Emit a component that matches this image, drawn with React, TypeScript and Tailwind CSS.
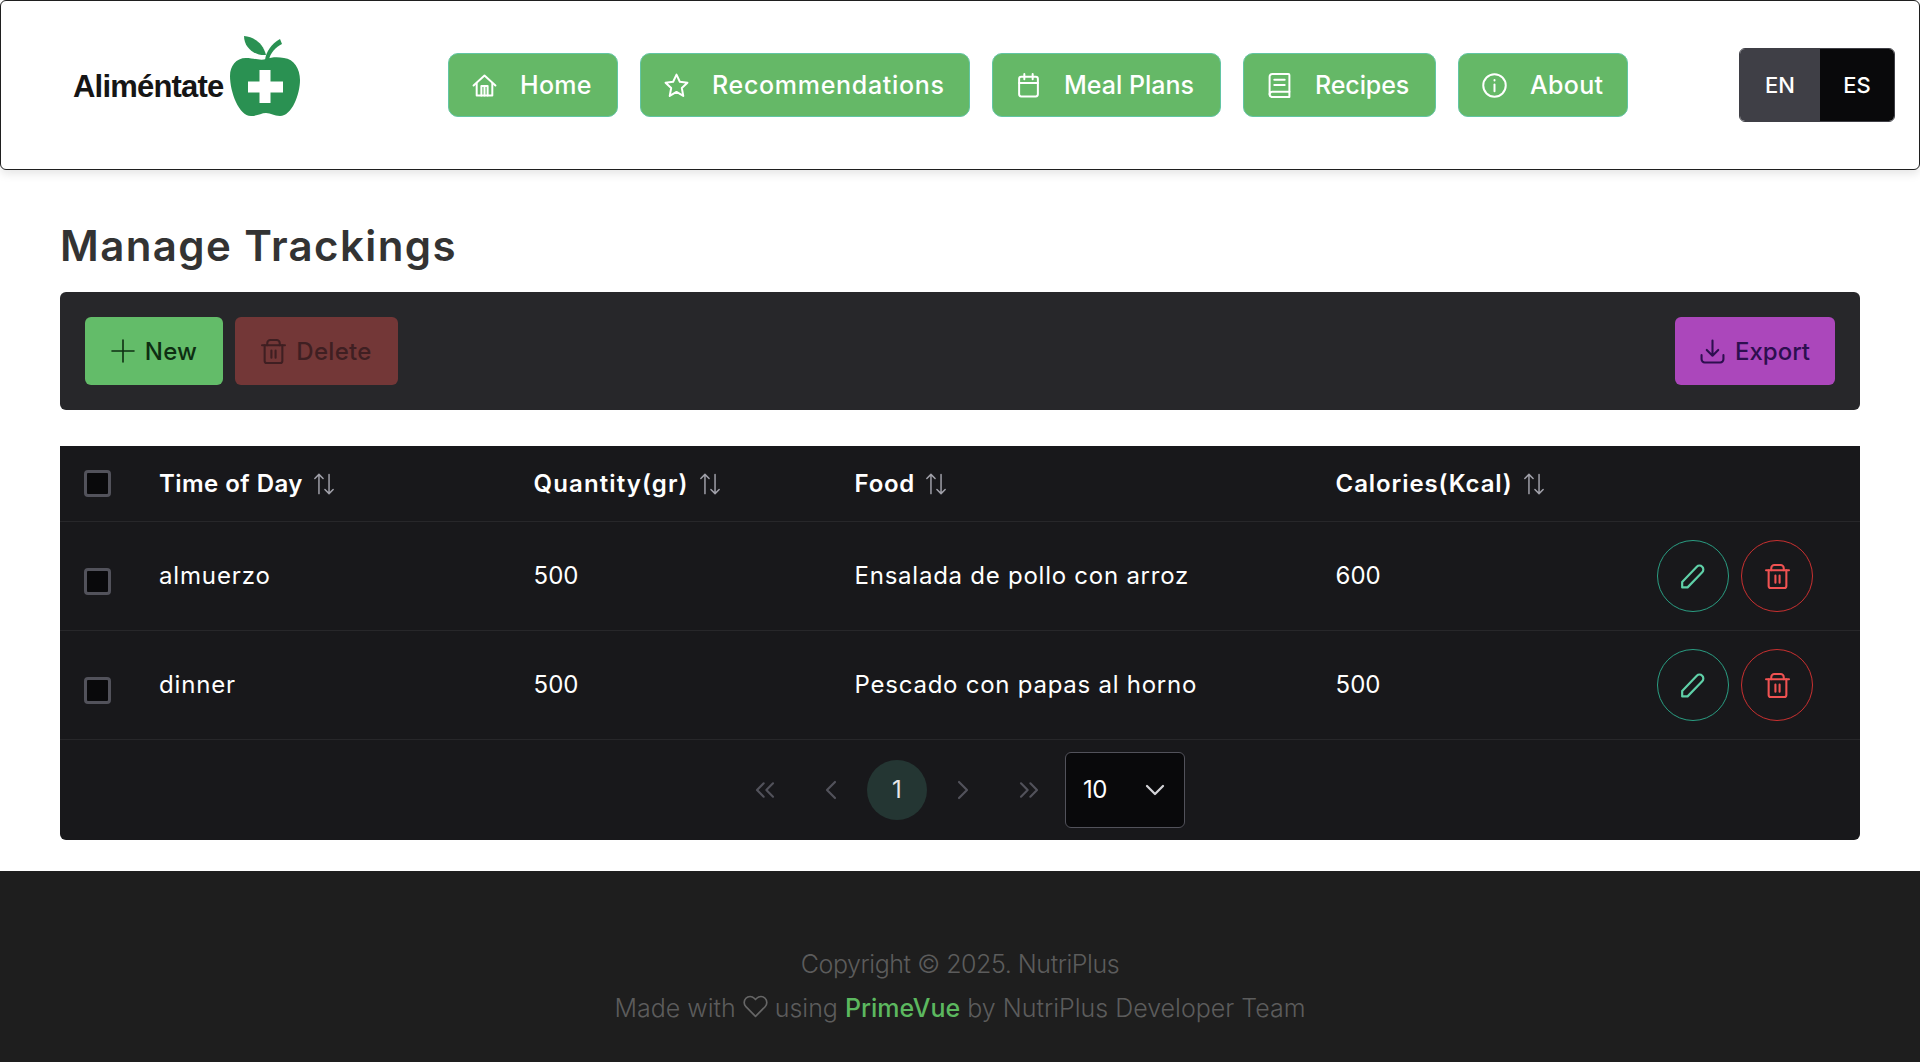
import React from 'react';
import { ChevronDown, ChevronLeft, ChevronRight, ChevronsLeft, ChevronsRight } from 'lucide-react';

type IconProps = { className?: string };

// primeicons-like line icons, 24x24 box
const Line = ({ className, sw = 1.9, children }: IconProps & { sw?: number; children: React.ReactNode }) => (
  <svg viewBox="0 0 24 24" fill="none" stroke="currentColor" strokeWidth={sw} strokeLinecap="round" strokeLinejoin="round" className={className}>
    {children}
  </svg>
);

const HomeIcon = (p: IconProps) => (
  <Line {...p}>
    <path d="M1.500 12 12 2.500 22.500 12" />
    <path d="M4.500 10v11.500h15V10" />
    <path d="M9 21.500V12.500h6v9" />
    <path d="M12 12.500v9" />
  </Line>
);
const StarIcon = (p: IconProps) => (
  <Line {...p}>
    <path d="m12 1.500 3.200 6.900 7.300.9-5.400 5.100 1.400 7.600-6.500-3.800-6.500 3.800 1.400-7.600-5.400-5.100 7.300-.9Z" />
  </Line>
);
const CalendarIcon = (p: IconProps) => (
  <Line {...p}>
    <rect x="3" y="3.500" width="18" height="19" rx="2" />
    <path d="M3 9.500h18M8 1v5M16 1v5" />
  </Line>
);
const BookIcon = (p: IconProps) => (
  <Line {...p}>
    <path d="M5 1h15.500a1 1 0 0 1 1 1v21H5a2.500 2.500 0 0 1-2.500-2.500v-17A2.500 2.500 0 0 1 5 1Z" />
    <path d="M2.500 20.500A2.500 2.500 0 0 1 5 18h16.500" />
    <path d="M7 6.500h10M7 11.500h10" />
  </Line>
);
const InfoIcon = (p: IconProps) => (
  <Line {...p}>
    <circle cx="12" cy="12" r="10.800" />
    <path d="M12 11v6.500" />
    <path d="M12 6.800v.4" />
  </Line>
);
const PlusIcon = (p: IconProps) => (
  <Line sw={1.6} {...p}>
    <path d="M12 1v22M1 12h22" />
  </Line>
);
const TrashIcon = (p: IconProps) => (
  <Line sw={2} {...p}>
    <path d="M1 6h22" />
    <path d="M6 6V4a3 3 0 0 1 3-3h6a3 3 0 0 1 3 3v2" />
    <path d="M3.500 6v15a2 2 0 0 0 2 2h13a2 2 0 0 0 2-2V6" />
    <path d="M10 11v7M14 11v7" />
  </Line>
);
const DownloadIcon = (p: IconProps) => (
  <Line sw={2} {...p}>
    <path d="M12 1.500V16M6.500 10.500 12 16l5.500-5.500" />
    <path d="M1.500 15.500v4a3 3 0 0 0 3 3h15a3 3 0 0 0 3-3v-4" />
  </Line>
);
const PencilIcon = (p: IconProps) => (
  <Line sw={2} {...p}>
    <path d="M2 17.500 15.500 3.500a3.500 3.500 0 0 1 5 5L7 22.500H2Z" />
  </Line>
);
const SortIcon = (p: IconProps) => (
  <Line sw={1.6} {...p}>
    <path d="M6.500 22.500V1.500M2 6l4.500-4.500L11 6" />
    <path d="M17.500 1.500v21M13 18l4.500 4.500L22 18" />
  </Line>
);
const HeartIcon = (p: IconProps) => (
  <Line sw={1.6} {...p}>
    <path d="M12 21.500 2.800 12.200a5.800 5.800 0 0 1 0-8.100 5.600 5.600 0 0 1 8 0L12 5.300l1.200-1.200a5.600 5.600 0 0 1 8 0 5.800 5.800 0 0 1 0 8.100Z" />
  </Line>
);

const navItems = [
  { icon: HomeIcon, label: 'Home', width: 'w-[170px]', tracking: 'tracking-[0.300px]' },
  { icon: StarIcon, label: 'Recommendations', width: 'w-[330px]', tracking: 'tracking-[0.700px]' },
  { icon: CalendarIcon, label: 'Meal Plans', width: 'w-[229px]', tracking: 'tracking-[0px]' },
  { icon: BookIcon, label: 'Recipes', width: 'w-[193px]', tracking: 'tracking-[-0.100px]' },
  { icon: InfoIcon, label: 'About', width: 'w-[170px]', tracking: 'tracking-[0.300px]' },
];

const columns = [
  { label: 'Time of Day', tracking: 'tracking-[0.460px]' },
  { label: 'Quantity(gr)', tracking: 'tracking-[1.100px]' },
  { label: 'Food', tracking: 'tracking-[0.700px]' },
  { label: 'Calories(Kcal)', tracking: 'tracking-[0.900px]' },
];

const rows = [
  { time: 'almuerzo', qty: '500', food: 'Ensalada de pollo con arroz', cal: '600' },
  { time: 'dinner', qty: '500', food: 'Pescado con papas al horno', cal: '500' },
];

const tableCols = 'grid grid-cols-[99px_374.600px_321px_481px_1fr] items-center';

function Logo() {
  return (
    <div className="flex items-end w-[228px] h-[80px] mb-[18px]">
      <span className="font-['Liberation_Sans',sans-serif] font-bold text-[31px] leading-none tracking-[-0.800px] text-[#151515] mb-[14px] w-[157px] whitespace-nowrap">
        Aliméntate
      </span>
      <svg viewBox="0 0 70 80" className="w-[70px] h-[80px] shrink-0">
        <path fill="#2a9152" d="M36 23C42 21 48 21 54 22 64 23 70 33 70 44 70 58 62 80 50 80 44 80 41 77 36 77 31 77 28 80 21 80 9 80 0 56 0 40 0 30 6 22 16 22 24 22 30 25 36 23Z" />
        <path fill="#2a9152" d="M14 0C24 1 33 7 36 19 25 20 14 12 14 0Z" />
        <path fill="#2a9152" d="M35 24C36 16 41 8 50 3L52 8C46 11 40 17 39 24Z" />
        <path fill="#fff" d="M29.500 34h11v11.500H53v11H40.500V67h-11V56.500H18v-11h11.500Z" />
      </svg>
    </div>
  );
}

function Checkbox() {
  return <div className="w-[27px] h-[27px] rounded-[4px] border-[3px] border-[#52525b] bg-[#09090b]" />;
}

export default function App() {
  return (
    <div className="min-h-[1062px] bg-white font-['Inter',sans-serif] flex flex-col">
      {/* Header */}
      <header className="h-[170px] border border-[#1f1f1f] rounded-[6px] shadow-[0_4px_10px_rgba(0,0,0,0.1)] bg-white flex items-center pl-[72px] pr-[24px]">
        <Logo />
        <nav className="flex gap-[22px] ml-[147px]">
          {navItems.map(({ icon: Icon, label, width, tracking }) => (
            <a key={label} className={`${width} h-[64px] rounded-[10px] bg-[#65b867] border border-[#62c5a4] text-white flex items-center pl-[23px] gap-[23px]`}>
              <Icon className="w-[25px] h-[25px] shrink-0" />
              <span className={`${tracking} text-[25px] font-medium pt-[2px] whitespace-nowrap`}>{label}</span>
            </a>
          ))}
        </nav>
        <div className="ml-auto flex w-[156px] h-[74px] rounded-[6px] overflow-hidden border border-[#3f3f46] text-white text-[22px] font-medium">
          <div className="w-[80px] bg-[#3f3f46] flex items-center justify-center">EN</div>
          <div className="flex-1 bg-[#09090b] flex items-center justify-center">ES</div>
        </div>
      </header>

      {/* Main */}
      <main className="px-[60px] pt-[46px] flex-1">
        <h1 className="text-[42px] leading-[60px] font-semibold text-[#333333] tracking-[1.400px]">Manage Trackings</h1>

        <div className="mt-[16px] h-[118px] bg-[#27272a] rounded-[6px] px-[25px] flex items-center">
          <button className="h-[68px] w-[138px] rounded-[6px] bg-[#63bc69] text-[#0e2e12] flex items-center justify-center gap-[10px] text-[24px] font-medium">
            <PlusIcon className="w-[24px] h-[24px]" />
            <span className="pt-[2px] tracking-[0.200px]">New</span>
          </button>
          <button className="ml-[12px] h-[68px] w-[163px] rounded-[6px] bg-[#733737] text-[#3f1f22] flex items-center justify-center gap-[10px] text-[24px] font-medium">
            <TrashIcon className="w-[25px] h-[25px]" />
            <span className="pt-[2px] tracking-[0.300px]">Delete</span>
          </button>
          <button className="ml-auto h-[68px] w-[160px] rounded-[6px] bg-[#ab47bb] text-[#2d0f4f] flex items-center justify-center gap-[10px] text-[24px] font-medium">
            <DownloadIcon className="w-[25px] h-[25px]" />
            <span className="pt-[2px]">Export</span>
          </button>
        </div>

        {/* Table */}
        <div className="mt-[36px] bg-[#18181b] text-white rounded-b-[6px]">
          <div className={`${tableCols} h-[75px]`}>
            <div className="pl-[24px]"><Checkbox /></div>
            {columns.map((col) => (
              <div key={col.label} className="flex items-center gap-[10px] text-[24px] font-semibold">
                <span className={`${col.tracking} whitespace-nowrap`}>{col.label}</span>
                <SortIcon className="w-[22px] h-[22px] text-[#a1a1aa]" />
              </div>
            ))}
          </div>
          {rows.map((row) => (
            <div key={row.time} className={`${tableCols} h-[109px] border-t border-[#27272a] text-[24px]`}>
              <div className="pl-[24px] pt-[11px]"><Checkbox /></div>
              <div className="tracking-[0.850px]">{row.time}</div>
              <div>{row.qty}</div>
              <div className="whitespace-nowrap tracking-[0.750px]">{row.food}</div>
              <div className="flex items-center justify-between pr-[47px]">
                <span>{row.cal}</span>
                <div className="flex gap-[12px]">
                  <button className="w-[72px] h-[72px] rounded-full border border-[#2a9d82] text-[#5fd0a8] flex items-center justify-center">
                    <PencilIcon className="w-[26px] h-[26px]" />
                  </button>
                  <button className="w-[72px] h-[72px] rounded-full border border-[#c93030] text-[#f05252] flex items-center justify-center">
                    <TrashIcon className="w-[25px] h-[25px]" />
                  </button>
                </div>
              </div>
            </div>
          ))}
          {/* Paginator */}
          <div className="h-[101px] border-t border-[#27272a] flex items-center justify-center text-[#52525b]">
            <div className="flex items-center">
              <span className="w-[60px] h-[60px] flex items-center justify-center"><ChevronsLeft className="w-[32px] h-[32px]" strokeWidth={1.6} /></span>
              <span className="ml-[6px] w-[60px] h-[60px] flex items-center justify-center"><ChevronLeft className="w-[32px] h-[32px]" strokeWidth={1.6} /></span>
              <span className="ml-[6px] w-[60px] h-[60px] rounded-full bg-[#243633] text-[#e8e8e8] text-[24px] flex items-center justify-center">1</span>
              <span className="ml-[6px] w-[60px] h-[60px] flex items-center justify-center"><ChevronRight className="w-[32px] h-[32px]" strokeWidth={1.6} /></span>
              <span className="ml-[6px] w-[60px] h-[60px] flex items-center justify-center"><ChevronsRight className="w-[32px] h-[32px]" strokeWidth={1.6} /></span>
              <div className="ml-[6px] w-[120px] h-[76px] rounded-[6px] border border-[#52525b] bg-[#09090b] text-white text-[24px] flex items-center justify-between pl-[17px] pr-[13px] tracking-[-0.500px]">
                <span>10</span>
                <ChevronDown className="w-[32px] h-[32px] text-[#d4d4d8]" strokeWidth={1.7} />
              </div>
            </div>
          </div>
        </div>
      </main>

      {/* Footer */}
      <footer className="mt-[31px] h-[191px] bg-[#1e1e1e] text-[#5c5c5c] text-[25px] font-light flex flex-col items-center pt-[78px] gap-[14px] leading-[30px]">
        <div className="tracking-[-0.450px]">Copyright © 2025. NutriPlus</div>
        <div className="flex items-center gap-[7px]">
          Made with
          <HeartIcon className="w-[25px] h-[25px] text-[#666666] -mt-[4px]" />
          using
          <span className="text-[#5cb85f] font-medium">PrimeVue</span>
          by NutriPlus Developer Team
        </div>
      </footer>
    </div>
  );
}
